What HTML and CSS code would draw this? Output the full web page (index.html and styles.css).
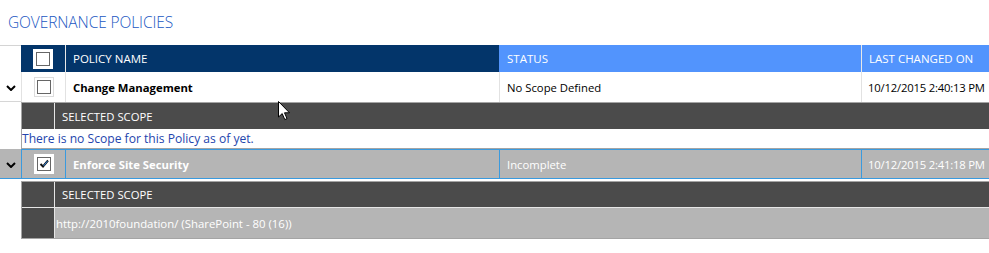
FILE: index.html
```html
<!DOCTYPE html>
<html>
<head>
<meta charset="utf-8">
<link rel="stylesheet" href="styles.css">
</head>
<body>
<div class="page">
  <h1 class="title">GOVERNANCE POLICIES</h1>
  <div class="table">
    <div class="row head">
      <div class="c c0"></div>
      <div class="c c1"><span class="cbw"><span class="cb"></span></span></div>
      <div class="c c2">POLICY NAME</div>
      <div class="c c3">STATUS</div>
      <div class="c c4">LAST CHANGED ON</div>
    </div>
    <div class="row item">
      <div class="c c0"><svg class="chev" width="10" height="6" viewBox="0 0 10 6"><polyline points="1,1 5,5 9,1" fill="none" stroke="#000" stroke-width="2"/></svg></div>
      <div class="c c1"><span class="cbw framed"><span class="cb"></span></span></div>
      <div class="c c2 name">Change Management</div>
      <div class="c c3">No Scope Defined</div>
      <div class="c c4 date">10/12/2015 2:40:13 PM</div>
    </div>
    <div class="scope">
      <div class="band"><div class="lead"></div><div class="label">SELECTED SCOPE</div></div>
      <div class="empty">There is no Scope for this Policy as of yet.</div>
    </div>
    <div class="row item sel">
      <div class="c c0"><svg class="chev" width="10" height="6" viewBox="0 0 10 6"><polyline points="1,1 5,5 9,1" fill="none" stroke="#000" stroke-width="2"/></svg></div>
      <div class="c c1"><span class="cbw"><span class="cb checked"><svg width="12" height="12" viewBox="0 0 12 12"><polyline points="2.5,6 5,8.5 10,2.5" fill="none" stroke="#111" stroke-width="2"/><polyline points="5.5,8 9.5,3" fill="none" stroke="#2a7fd8" stroke-width="1"/></svg></span></span></div>
      <div class="c c2 name">Enforce Site Security</div>
      <div class="c c3">Incomplete</div>
      <div class="c c4 date">10/12/2015 2:41:18 PM</div>
    </div>
    <div class="scope second">
      <div class="band"><div class="lead"></div><div class="label">SELECTED SCOPE</div></div>
      <div class="entry"><div class="lead"></div><div class="url">http://2010foundation/ (SharePoint - 80 (16))</div></div>
    </div>
  </div>
  <svg class="cursor" width="13" height="20" viewBox="0 0 13 20"><path d="M0.5,0.5 L0.5,16 L4.2,12.6 L6.8,18.6 L9,17.6 L6.5,11.8 L11.5,11.8 Z" fill="#fff" stroke="#000" stroke-width="1" stroke-linejoin="miter"/></svg>
</div>
</body>
</html>
```
FILE: styles.css
```css
* { box-sizing: border-box; }
html, body { margin: 0; padding: 0; background: #fff; }
body { font-family: "Open Sans", "Noto Sans", sans-serif; font-size: 11.3px; color: #000; }
.page { position: relative; width: 989px; height: 253px; overflow: hidden; }
.title {
  margin: 0; padding: 11px 0 0 8px; height: 45px;
  font-family: "Open Sans", sans-serif; font-weight: 300; font-size: 15.5px;
  color: #2157c2; letter-spacing: -0.1px;
}
.table { display: flex; flex-direction: column; }
.row { display: grid; grid-template-columns: 21px 44px 434px 362px 128px; }
.c { display: flex; align-items: center; padding-left: 7px; white-space: nowrap; }
.c0 { padding-left: 0; justify-content: center; }
.c1 { padding-left: 0; justify-content: center; }
.head { height: 27px; color: #fff; font-size: 11.5px; }
.head .c0 { border-top: 1px solid #d4d4d4; background: #fff; }
.head .c1, .head .c2 { background: #03356a; }
.head .c2 { border-left: 1px solid #e8e8e8; }
.head .c3 { background: #5294fd; padding-left: 8px; }
.head .c4 { background: #5294fd; border-left: 1px solid #e8e8e8; }
.item { height: 30px; }
.item .c0 { border-bottom: 1px solid #d6d6d6; }
.item .c1, .item .c2, .item .c3, .item .c4 { border-left: 1px solid #e2e2e2; }
.date { letter-spacing: -0.2px; padding-left: 6px; }
.name { font-weight: 700; }
.cbw { display: inline-flex; padding: 3px; background: #fff; }
.cbw.framed { border: 1px solid #dcdcdc; padding: 2px; }
.cb { width: 14px; height: 14px; border: 1px solid #666; background: #fff; display: inline-flex; align-items: center; justify-content: center; }
.chev { margin-top: 3px; }
.scope { margin-left: 21px; border: 1px solid #a4a4a4; border-right: 0; display: flex; flex-direction: column; }
.band { display: flex; height: 26px; background: #4b4b4b; color: #fff; }
.band .lead { width: 33px; border-right: 1px solid #e6e6e6; }
.band .label { display: flex; align-items: center; padding-left: 7px; }
.empty { height: 19px; display: flex; align-items: center; padding-left: 0; color: #2445ad; background: #fff; font-size: 12.1px; }
.sel { height: 30px; background: #b5b5b5; color: #fff; }
.sel .c1, .sel .c2, .sel .c3, .sel .c4 { border-left: 1px solid #3a9ade; border-top: 1px solid #3a9ade; border-bottom: 1px solid #3a9ade; }
.sel .c0 { border-bottom: 1px solid #3a9ade; }
.second { margin-top: 2px; }
.second .band { height: 25px; }
.entry { display: flex; height: 31px; background: #b5b5b5; border-top: 1px solid #e6e6e6; }
.entry .lead { width: 33px; background: #4b4b4b; border-right: 1px solid #e6e6e6; }
.entry .url { display: flex; align-items: center; color: #fff; padding-left: 1px; font-size: 11.4px; }
.cursor { position: absolute; left: 278px; top: 101px; }
```
